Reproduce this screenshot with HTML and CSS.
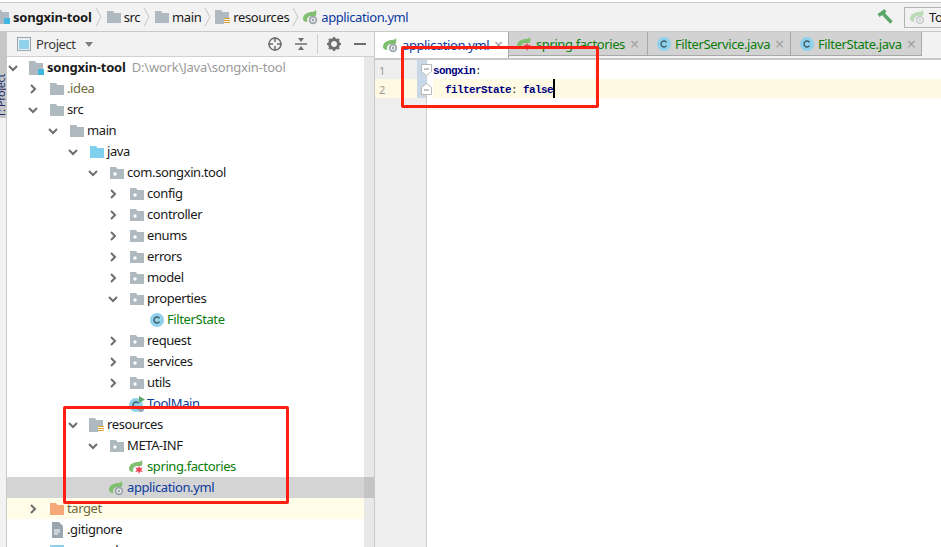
FILE: index.html
```html
<!DOCTYPE html>
<html lang="en">
<head>
<meta charset="utf-8">
<title>songxin-tool</title>
<link rel="stylesheet" href="styles.css">
</head>
<body>
<svg class="defs" width="0" height="0" aria-hidden="true">
  <defs>
    <symbol id="folder" viewBox="0 0 16 16"><path d="M1 2h6l1.500 2H15v10H1z" fill="#aeb9c0"/></symbol>
    <symbol id="pkg" viewBox="0 0 16 16"><path d="M1 2h6l1.500 2H15v10H1z" fill="#aeb9c0"/><circle cx="6" cy="9" r="1.700" fill="#fff"/></symbol>
    <symbol id="module" viewBox="0 0 16 16"><path d="M0 1h6l1.500 2H14v6H9v6H0z" fill="#aeb9c0"/><rect x="9" y="9" width="6" height="6" fill="#40b6e0"/></symbol>
    <symbol id="src" viewBox="0 0 16 16"><path d="M1 2h6l1.500 2H15v10H1z" fill="#7fd0ee"/></symbol>
    <symbol id="res" viewBox="0 0 16 16"><path d="M0 1h6l1.500 2H14v6H9v6H0z" fill="#aeb9c0"/><path d="M9 9.500h6M9 11.500h6M9 13.500h6" stroke="#e0a030" stroke-width="1"/></symbol>
    <symbol id="excl" viewBox="0 0 16 16"><path d="M1 2h6l1.500 2H15v10H1z" fill="#f7a878"/></symbol>
    <symbol id="cls" viewBox="0 0 16 16"><circle cx="8" cy="8" r="7" fill="#8fd0ea"/><path d="M10.500 6.300A3 3 0 1 0 10.500 9.700" fill="none" stroke="#3d5a68" stroke-width="1.400"/></symbol>
    <symbol id="leaf" viewBox="0 0 16 16"><path d="M0 10C0 5 5 3 9 3c2 0 3-1 4-2 .5 3 .5 5-.5 6H8a4 4 0 0 0-3.500 6C2 13 0 12 0 10z" fill="#7fbf6f"/><circle cx="10" cy="11" r="4.200" fill="#9aa4aa"/><circle cx="10" cy="11" r="2.500" fill="#e9edef"/><circle cx="10" cy="11" r="1.200" fill="#9aa4aa"/></symbol>
    <symbol id="leafred" viewBox="0 0 16 16"><path d="M0 10C0 5 5 3 9 3c2 0 3-1 4-2 .5 3 .5 5-.5 6H8a4 4 0 0 0-3.500 6C2 13 0 12 0 10z" fill="#7fbf6f"/><path d="M10 6.500l1 2.500 2.700-.6-1.500 2.300 1.500 2.300-2.700-.5-1 2.500-1-2.500-2.700.5 1.500-2.300-1.500-2.300 2.700.6z" fill="#e8475a"/></symbol>
    <symbol id="run" viewBox="0 0 16 16"><circle cx="7" cy="9" r="7" fill="#8fd0ea"/><path d="M9.500 7.300A3 3 0 1 0 9.500 10.700" fill="none" stroke="#3d5a68" stroke-width="1.400"/><path d="M10 0l6 3.500L10 7z" fill="#59a869"/><circle cx="12" cy="13" r="3" fill="#9aa4aa"/></symbol>
    <symbol id="file" viewBox="0 0 16 16"><path d="M3 0h7l4 4v12H3z" fill="#9aa7b0"/><path d="M5 8h6M5 10h6M5 12h4" stroke="#fff" stroke-width="1"/></symbol>
    <symbol id="pom" viewBox="0 0 16 16"><path d="M1 2h14v12H1z" fill="#8fd0ea"/></symbol>
    <symbol id="sep" viewBox="0 0 8 20"><path d="M1 1l5 9-5 9" fill="none" stroke="#c4c4c4" stroke-width="1"/></symbol>
    <symbol id="right" viewBox="0 0 10 10"><path d="M3 1l4 4-4 4" fill="none" stroke="#6e6e6e" stroke-width="2"/></symbol>
    <symbol id="down" viewBox="0 0 10 10"><path d="M1 3l4 4 4-4" fill="none" stroke="#6e6e6e" stroke-width="2"/></symbol>
    <symbol id="foldopen" viewBox="0 0 11 12"><path d="M.5.5h10v7l-5 4-5-4z" fill="#fff" stroke="#b8b8b8"/><path d="M3 5h5" stroke="#8a8a8a"/></symbol>
    <symbol id="foldend" viewBox="0 0 11 12"><path d="M.5 11.500h10v-7l-5-4-5 4z" fill="#fff" stroke="#b8b8b8"/><path d="M3 7h5" stroke="#8a8a8a"/></symbol>
  </defs>
</svg>
<div class="app">
  <div class="topline"></div>
  <nav class="navbar">
    <span class="crumb crumb-first"><svg class="ic"><use href="#module"/></svg><b>songxin-tool</b></span>
    <svg class="sep"><use href="#sep"/></svg>
    <span class="crumb"><svg class="ic"><use href="#folder"/></svg>src</span>
    <svg class="sep"><use href="#sep"/></svg>
    <span class="crumb"><svg class="ic"><use href="#folder"/></svg>main</span>
    <svg class="sep"><use href="#sep"/></svg>
    <span class="crumb"><svg class="ic"><use href="#res"/></svg>resources</span>
    <svg class="sep"><use href="#sep"/></svg>
    <span class="crumb crumb-file"><svg class="ic"><use href="#leaf"/></svg>application.yml</span>
    <span class="spacer"></span>
    <svg class="hammer" viewBox="0 0 16 16"><path d="M1.500 6.500L8.500 1.500M5 3.500L14.500 13.500" fill="none" stroke="#59a869" stroke-width="3.400"/></svg>
    <span class="runcfg"><svg class="ic faded"><use href="#leaf"/></svg>ToolMain</span>
  </nav>
  <div class="main">
    <aside class="stripe"><span class="stripe-label">1: Project</span></aside>
    <section class="project">
      <header class="phead">
        <svg class="ic-view" viewBox="0 0 14 14"><rect x=".5" y=".5" width="13" height="13" fill="#eee" stroke="#9aa7b0"/><rect x="2" y="3" width="10" height="9" fill="#8fd0ea"/></svg>
        <span class="ptitle">Project</span>
        <svg class="caret" viewBox="0 0 8 5"><path d="M0 0h8L4 5z" fill="#7f7f7f"/></svg>
        <span class="spacer"></span>
        <svg class="tool" viewBox="0 0 16 16"><circle cx="8" cy="8" r="6" fill="none" stroke="#6e6e6e" stroke-width="1.500"/><path d="M8 1v5M8 10v5M1 8h5M10 8h5" stroke="#6e6e6e" stroke-width="1.500"/></svg>
        <svg class="tool" viewBox="0 0 16 16"><path d="M2 8h12" stroke="#6e6e6e" stroke-width="1.500"/><path d="M5 2h6L8 6zM5 14h6l-3-4z" fill="#6e6e6e"/></svg>
        <span class="tdiv"></span>
        <svg class="tool tool-gear" viewBox="0 0 16 16"><circle cx="8" cy="8" r="4.500" fill="none" stroke="#6e6e6e" stroke-width="3"/><path d="M8 1v3M8 12v3M1 8h3M12 8h3M3 3l2 2M11 11l2 2M13 3l-2 2M3 13l2-2" stroke="#6e6e6e" stroke-width="2.200"/></svg>
        <svg class="tool" viewBox="0 0 16 16"><path d="M2 8h12" stroke="#6e6e6e" stroke-width="2"/></svg>
      </header>
      <div class="treewrap">
        <div class="tree">
          <div class="row l0"><svg class="ar"><use href="#down"/></svg><svg class="ic"><use href="#module"/></svg><b>songxin-tool</b><span class="path">D:\work\Java\songxin-tool</span></div>
          <div class="row l1"><svg class="ar"><use href="#right"/></svg><svg class="ic"><use href="#folder"/></svg><span class="muted">.idea</span></div>
          <div class="row l1"><svg class="ar"><use href="#down"/></svg><svg class="ic"><use href="#folder"/></svg>src</div>
          <div class="row l2"><svg class="ar"><use href="#down"/></svg><svg class="ic"><use href="#folder"/></svg>main</div>
          <div class="row l3"><svg class="ar"><use href="#down"/></svg><svg class="ic"><use href="#src"/></svg>java</div>
          <div class="row l4"><svg class="ar"><use href="#down"/></svg><svg class="ic"><use href="#pkg"/></svg>com.songxin.tool</div>
          <div class="row l5"><svg class="ar"><use href="#right"/></svg><svg class="ic"><use href="#pkg"/></svg>config</div>
          <div class="row l5"><svg class="ar"><use href="#right"/></svg><svg class="ic"><use href="#pkg"/></svg>controller</div>
          <div class="row l5"><svg class="ar"><use href="#right"/></svg><svg class="ic"><use href="#pkg"/></svg>enums</div>
          <div class="row l5"><svg class="ar"><use href="#right"/></svg><svg class="ic"><use href="#pkg"/></svg>errors</div>
          <div class="row l5"><svg class="ar"><use href="#right"/></svg><svg class="ic"><use href="#pkg"/></svg>model</div>
          <div class="row l5"><svg class="ar"><use href="#down"/></svg><svg class="ic"><use href="#pkg"/></svg>properties</div>
          <div class="row l6"><span class="ar"></span><svg class="ic"><use href="#cls"/></svg><span class="green">FilterState</span></div>
          <div class="row l5"><svg class="ar"><use href="#right"/></svg><svg class="ic"><use href="#pkg"/></svg>request</div>
          <div class="row l5"><svg class="ar"><use href="#right"/></svg><svg class="ic"><use href="#pkg"/></svg>services</div>
          <div class="row l5"><svg class="ar"><use href="#right"/></svg><svg class="ic"><use href="#pkg"/></svg>utils</div>
          <div class="row l5"><span class="ar"></span><svg class="ic"><use href="#run"/></svg><span class="blue">ToolMain</span></div>
          <div class="row l3"><svg class="ar"><use href="#down"/></svg><svg class="ic"><use href="#res"/></svg>resources</div>
          <div class="row l4"><svg class="ar"><use href="#down"/></svg><svg class="ic"><use href="#pkg"/></svg>META-INF</div>
          <div class="row l5"><span class="ar"></span><svg class="ic"><use href="#leafred"/></svg><span class="green">spring.factories</span></div>
          <div class="row l4 selected"><span class="ar"></span><svg class="ic"><use href="#leaf"/></svg><span class="blue">application.yml</span></div>
          <div class="row l1 excluded"><svg class="ar"><use href="#right"/></svg><svg class="ic"><use href="#excl"/></svg><span class="olive">target</span></div>
          <div class="row l1"><span class="ar"></span><svg class="ic"><use href="#file"/></svg>.gitignore</div>
          <div class="row l1"><span class="ar"></span><svg class="ic"><use href="#pom"/></svg>pom.xml</div>
        </div>
        <div class="scrollbar"><div class="thumb"></div></div>
      </div>
    </section>
    <section class="editor">
      <div class="tabs">
        <div class="tab active"><svg class="ic"><use href="#leaf"/></svg><span class="blue">application.yml</span><span class="x">×</span></div>
        <div class="tab"><svg class="ic"><use href="#leafred"/></svg><span class="green">spring.factories</span><span class="x">×</span></div>
        <div class="tab"><svg class="ic"><use href="#cls"/></svg><span class="green">FilterService.java</span><span class="x">×</span></div>
        <div class="tab"><svg class="ic"><use href="#cls"/></svg><span class="green">FilterState.java</span><span class="x">×</span></div>
      </div>
      <div class="code">
        <div class="gutter">
          <div class="ln">1<svg class="mark"><use href="#foldopen"/></svg></div>
          <div class="ln cur">2<svg class="mark"><use href="#foldend"/></svg></div>
        </div>
        <div class="lines">
          <div class="cl"><span class="key">songxin</span><span class="colon">:</span></div>
          <div class="cl cur"><span class="key">  filterState</span><span class="colon">: </span><span class="key">false</span><span class="cursor"></span></div>
        </div>
      </div>
    </section>
  </div>
  <div class="redbox box-tree"></div>
  <div class="redbox box-code"></div>
</div>
</body>
</html>
```
FILE: styles.css
```css
* { box-sizing: border-box; }
html, body { margin: 0; padding: 0; }
body { background: #fff; font-family: "Noto Sans", sans-serif; font-size: 13px; letter-spacing: -.4px; color: #1a1a1a; }
b { letter-spacing: -.2px; }
.defs { position: absolute; }
.app { position: relative; width: 941px; height: 547px; overflow: hidden; display: flex; flex-direction: column; }
.topline { height: 3px; background: #fff; border-bottom: 1px solid #c9c9c9; flex: none; }
.navbar { height: 29px; flex: none; display: flex; align-items: center; background: #f2f2f2; border-bottom: 1px solid #c9c9c9; white-space: nowrap; }
.crumb { display: flex; align-items: center; gap: 2px; }
.crumb-first { margin-left: -5px; }
.crumb-file { color: #0b3a9e; }
.sep { width: 8px; height: 20px; margin: 0 3px; flex: none; }
.ic { width: 16px; height: 16px; flex: none; }
.faded { opacity: .45; }
.spacer { flex: 1; }
.hammer { width: 16px; height: 16px; margin-right: 11px; flex: none; }
.runcfg { width: 60px; height: 21px; margin-right: -23px; flex: none; border: 1px solid #b5b5b5; background: #f2f2f2; display: flex; align-items: center; gap: 3px; padding-left: 5px; overflow: hidden; }
.main { flex: 1; min-height: 0; display: flex; }
.stripe { width: 7px; flex: none; background: #f2f2f2; border-right: 1px solid #c9c9c9; overflow: hidden; }
.stripe-label { display: block; margin-left: -3px; width: 9px; height: 86px; padding-bottom: 8px; background: #c6c6c6; color: #1c2a6e; writing-mode: vertical-rl; transform: rotate(180deg); font-size: 11px; line-height: 8px; white-space: nowrap; }
.project { width: 368px; flex: none; display: flex; flex-direction: column; border-right: 1px solid #c9c9c9; }
.phead { height: 25px; flex: none; display: flex; align-items: center; background: #f2f2f2; border-bottom: 1px solid #d0d0d0; padding: 0 6px 0 10px; }
.ic-view { width: 14px; height: 14px; flex: none; margin-right: 5px; }
.ptitle { color: #3a3a3a; }
.caret { width: 8px; height: 5px; margin-left: 9px; flex: none; }
.tool { width: 16px; height: 16px; margin-left: 10px; flex: none; }
.tool-gear { margin-left: 8px; }
.tdiv { width: 1px; height: 20px; background: #d0d0d0; margin-left: 8px; }
.treewrap { flex: 1; min-height: 0; display: flex; overflow: hidden; }
.tree { flex: 1; min-width: 0; }
.row { height: 21px; padding-bottom: 2px; display: flex; align-items: center; white-space: nowrap; color: #1a1a1a; }
.row .ic { margin: 2px 2px 0 0; }
.ar { width: 10px; height: 10px; flex: none; margin: 2px 11px 0 1px; }
.l0 { padding-left: 0; }
.l1 { padding-left: 20px; }
.l2 { padding-left: 40px; }
.l3 { padding-left: 60px; }
.l4 { padding-left: 80px; }
.l5 { padding-left: 100px; }
.l6 { padding-left: 120px; }
.selected { background: #d4d4d4; }
.excluded { background: #fffde8; }
.path { color: #9a9a9a; margin-left: 6px; letter-spacing: -.2px; }
.muted, .olive { color: #6f6a3c; }
.green { color: #0a7d0a; }
.blue { color: #0b3a9e; }
.scrollbar { width: 10px; flex: none; background: #e8e8e8; padding-top: 420px; }
.thumb { height: 21px; background: #c4c4c4; }
.editor { flex: 1; min-width: 0; display: flex; flex-direction: column; }
.tabs { height: 28px; flex: none; display: flex; border-bottom: 2px solid #c9c9c9; background: #f2f2f2; }
.tab { height: 24px; flex: none; display: flex; align-items: center; gap: 3px; background: #d2d2d2; border-right: 1px solid #a8a8a8; border-bottom: 1px solid #a8a8a8; padding-left: 8px; white-space: nowrap; }
.tab:nth-child(1) { width: 134px; }
.tab:nth-child(2) { width: 139px; }
.tab:nth-child(3) { width: 143px; }
.tab:nth-child(4) { width: 131px; }
.tab.active { background: #fff; height: 26px; border-bottom: 0; }
.x { color: #a0a0a0; font-size: 16px; line-height: 1; margin-left: 2px; }
.code { flex: 1; display: flex; min-height: 0; }
.gutter { width: 52px; flex: none; background: linear-gradient(90deg, #eee 42px, #c9d8e6 42px, #c9d8e6 51px, #eee 51px) no-repeat 0 0 / 100% 38px #eee; border-right: 1px solid #cfcfcf; font-size: 11px; letter-spacing: 0; color: #9a9a9a; }
.ln { height: 19px; line-height: 22px; padding-left: 4px; position: relative; }
.ln.cur { background: linear-gradient(90deg, #fff8e3 42px, #c9d8e6 42px, #c9d8e6 51px, #fff8e3 51px); }
.mark { position: absolute; left: 46px; top: 4px; width: 11px; height: 12px; }
.lines { flex: 1; padding-left: 6px; font-family: "Liberation Mono", monospace; font-size: 11px; letter-spacing: -.6px; }
.cl { height: 19px; line-height: 22px; white-space: pre; }
.cl.cur { background: #fffae3; }
.key { color: #000080; font-weight: 700; }
.colon { color: #333; }
.cursor { display: inline-block; width: 2px; height: 19px; background: #000; vertical-align: top; }
.redbox { position: absolute; border: 3px solid #ff1f10; border-radius: 2px; pointer-events: none; }
.box-tree { left: 63px; top: 406px; width: 226px; height: 98px; }
.box-code { left: 401px; top: 46px; width: 198px; height: 62px; }
```
